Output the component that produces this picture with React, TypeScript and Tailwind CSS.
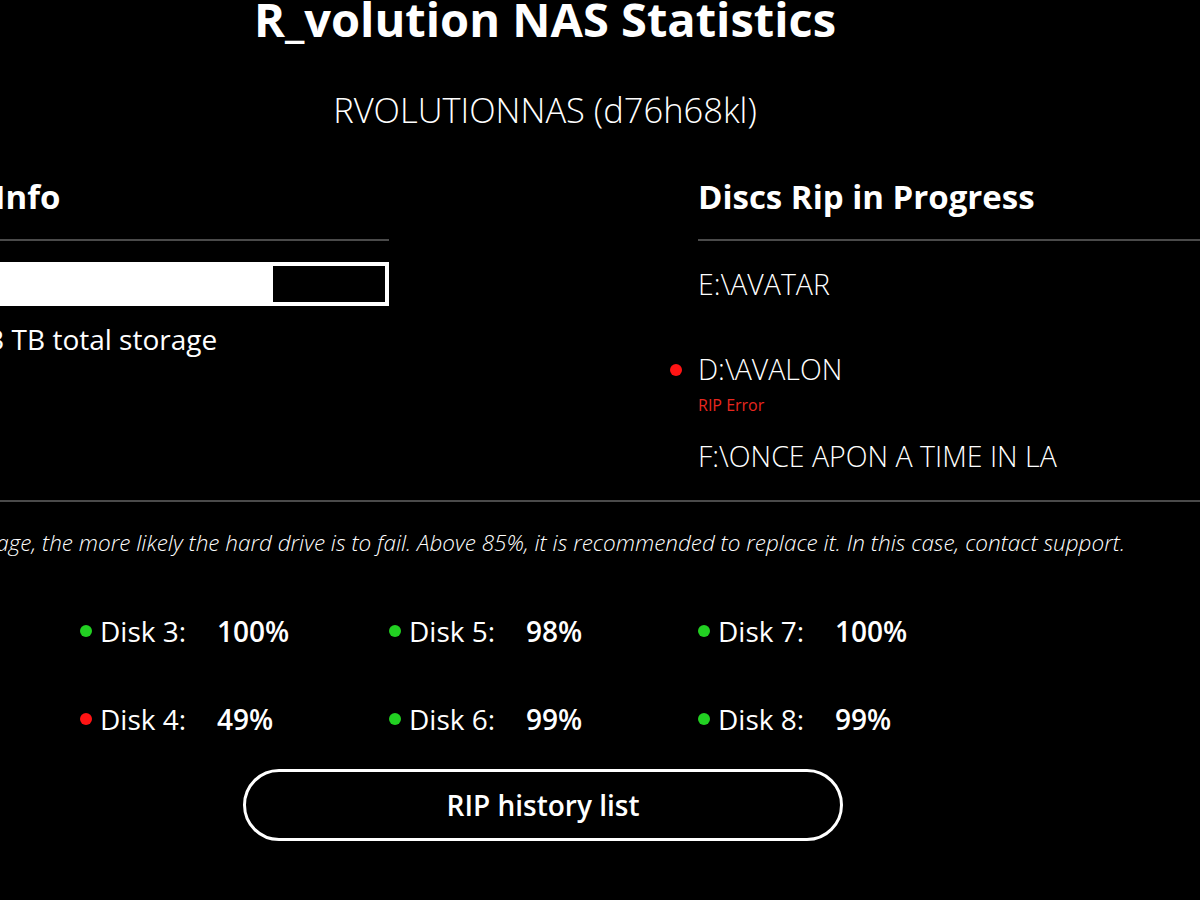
import React from "react";

type Disk = { name: string; value: number };

const disks: Disk[] = [
  { name: "Disk 1", value: 100 },
  { name: "Disk 3", value: 100 },
  { name: "Disk 5", value: 98 },
  { name: "Disk 7", value: 100 },
  { name: "Disk 2", value: 97 },
  { name: "Disk 4", value: 49 },
  { name: "Disk 6", value: 99 },
  { name: "Disk 8", value: 99 },
];

function StatusDot({ ok }: { ok: boolean }) {
  return <span className={`block w-3 h-3 rounded-full ${ok ? "bg-[#22d022]" : "bg-[#ff1414]"}`} />;
}

function DiskCell({ disk }: { disk: Disk }) {
  return (
    <div className="flex items-center text-[28px] leading-none">
      <StatusDot ok={disk.value >= 85} />
      <span className="ml-2 w-[117px]">{disk.name}:</span>
      <span className="font-semibold">{disk.value}%</span>
    </div>
  );
}

function Divider() {
  return <div className="h-[2px] bg-[#4a4a4a]" />;
}

export default function App() {
  const usedPct = 78.5;

  return (
    <div className="w-[1200px] h-[900px] overflow-hidden bg-black text-white font-['Open_Sans',sans-serif]">
      <div className="w-[1600px] ml-[-255px]">
        <h1 className="mt-[-4px] text-center text-[47px] leading-none font-bold">R_volution NAS Statistics</h1>
        <p className="mt-[50px] text-center text-[34.5px] leading-none font-light">RVOLUTIONNAS (d76h68kl)</p>

        <div className="mt-[52px] flex">
          {/* storage */}
          <div className="ml-[115px] w-[529px]">
            <h2 className="text-[33px] leading-none font-bold">Storage Info</h2>
            <div className="mt-[26px]">
              <Divider />
            </div>
            <div className="mt-[21px] h-[44px] border-4 border-white flex">
              <div className="bg-white" style={{ width: `${usedPct}%` }} />
            </div>
            <p className="mt-[19px] text-[28px] leading-none">6.1 TB / 9.3 TB total storage</p>
          </div>

          {/* rips */}
          <div className="ml-[309px] w-[520px]">
            <h2 className="text-[33px] leading-none font-bold">Discs Rip in Progress</h2>
            <div className="mt-[26px]">
              <Divider />
            </div>
            <p className="mt-[29px] text-[28.5px] leading-none font-light">E:\AVATAR</p>
            <div className="relative mt-[57px]">
              <span className="absolute left-[-28px] top-[9px]">
                <StatusDot ok={false} />
              </span>
              <p className="text-[28.5px] leading-none font-light">D:\AVALON</p>
            </div>
            <p className="mt-[13px] text-[16px] leading-none text-[#e8271f]">RIP Error</p>
            <p className="mt-[29px] text-[28.5px] leading-none font-light">F:\ONCE APON A TIME IN LA</p>
          </div>
        </div>

        <div className="mt-[30px]">
          <Divider />
        </div>

        <div className="mt-[30px] flex justify-end pr-[220px]">
          <p className="whitespace-nowrap text-[22.5px] leading-none italic font-light">
            The lower the percentage, the more likely the hard drive is to fail. Above 85%, it is recommended to replace
            it. In this case, contact support.
          </p>
        </div>

        <div className="mt-[62px] ml-[26px] grid grid-cols-[repeat(4,309px)] gap-y-[60px]">
          {disks.map((d) => (
            <DiskCell key={d.name} disk={d} />
          ))}
        </div>

        <button className="mt-[36px] ml-[498px] flex items-center justify-center w-[600px] h-[72px] rounded-full border-[3px] border-white text-[28px] font-semibold">
          RIP history list
        </button>
      </div>
    </div>
  );
}
